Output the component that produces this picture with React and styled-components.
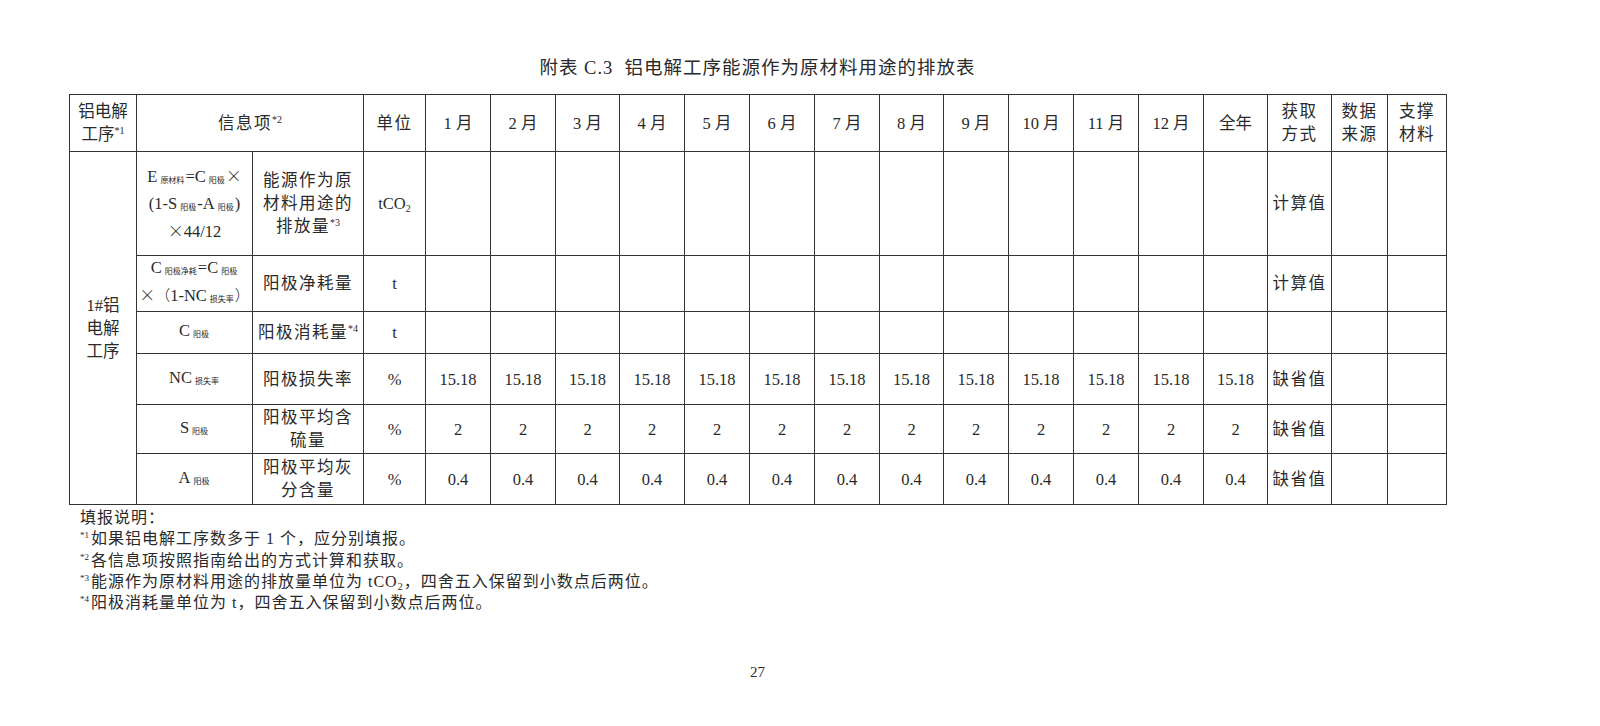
import React from "react";
import styled, { createGlobalStyle } from "styled-components";

const Global = createGlobalStyle`
  html, body { margin: 0; padding: 0; background: #fff; }
  body { font-family: "Liberation Serif", "Noto Sans CJK SC", serif; color: #2a2a2a; }
`;

const Page = styled.div`
  width: 1600px;
  height: 726px;
  box-sizing: border-box;
  padding: 56px 0 0 69px;
  display: flex;
  flex-direction: column;
`;

const Title = styled.h1`
  width: 1377px;
  margin: 0 0 14px;
  text-align: center;
  font-weight: normal;
  font-size: 18.5px;
  line-height: 24px;
  letter-spacing: 1px;
`;

const Table = styled.table`
  width: 1378px;
  table-layout: fixed;
  border-collapse: collapse;
  font-size: 16.5px;
  line-height: 23px;
`;

const Cell = styled.td`
  border: 1px solid #333;
  padding: 0 ${(p) => (p.$tight ? "0" : "2px")};
  text-align: center;
  vertical-align: middle;
  font-weight: normal;
  white-space: ${(p) => (p.$tight ? "nowrap" : "normal")};
  letter-spacing: ${(p) => (p.$cjk ? "1.5px" : "0")};
`;

const Row = styled.tr`
  height: ${(p) => p.$h}px;
`;

const Sub = styled.span`
  font-size: 8px;
  vertical-align: -1px;
  margin: 0 1px 0 3px;
  letter-spacing: 0;
`;

const Times = styled.span`
  font-family: "Noto Sans CJK SC", sans-serif;
  font-weight: 300;
  font-size: 16px;
`;

const Paren = styled.span`
  font-family: "Noto Sans CJK SC", sans-serif;
  font-weight: 300;
  font-size: 15px;
`;

const Sup = styled.sup`
  font-size: 10px;
  vertical-align: 6px;
  line-height: 0;
  letter-spacing: 0;
`;

const Small = styled.sub`
  font-size: 10px;
  vertical-align: -3px;
  line-height: 0;
`;

const Notes = styled.div`
  margin: 2px 0 0 11px;
  font-size: 16px;
  line-height: 21.3px;
  letter-spacing: 1px;
`;

const NoteLine = styled.div`
  white-space: nowrap;
`;

const NoteSup = styled.sup`
  font-size: 9px;
  vertical-align: 6px;
  line-height: 0;
  margin-right: 2px;
  letter-spacing: 0;
`;

const PageNo = styled.div`
  width: 1377px;
  margin-top: 51px;
  text-align: center;
  font-size: 15px;
`;

const widths = [67, 116, 111, 62, 65, 65, 64, 65, 65, 65, 65, 64, 65, 65, 65, 65, 64, 64, 56, 59];
const months = ["1 月", "2 月", "3 月", "4 月", "5 月", "6 月", "7 月", "8 月", "9 月", "10 月", "11 月", "12 月", "全年"];

const Values = ({ v, method }) => (
  <>
    {Array.from({ length: 13 }).map((_, i) => (
      <Cell key={i}>{v}</Cell>
    ))}
    <Cell $cjk>{method}</Cell>
    <Cell />
    <Cell />
  </>
);

export default function App() {
  return (
    <Page>
      <Global />
      <Title>附表 C.3&nbsp; 铝电解工序能源作为原材料用途的排放表</Title>
      <Table>
        <colgroup>
          {widths.map((w, i) => (
            <col key={i} style={{ width: w }} />
          ))}
        </colgroup>
        <tbody>
          <Row $h={57}>
            <Cell as="th">
              铝电解
              <br />
              工序<Sup>*1</Sup>
            </Cell>
            <Cell as="th" colSpan={2} $cjk>
              信息项<Sup>*2</Sup>
            </Cell>
            <Cell as="th" $cjk>单位</Cell>
            {months.map((m) => (
              <Cell as="th" key={m}>{m}</Cell>
            ))}
            <Cell as="th" $cjk>获取<br />方式</Cell>
            <Cell as="th" $cjk>数据<br />来源</Cell>
            <Cell as="th" $cjk>支撑<br />材料</Cell>
          </Row>
          <Row $h={104}>
            <Cell rowSpan={6}>
              1#铝
              <br />
              电解
              <br />
              工序
            </Cell>
            <Cell $tight>
              E<Sub>原材料</Sub>=C<Sub>阳极</Sub><Times>×</Times>
              <br />
              (1-S<Sub>阳极</Sub>-A<Sub>阳极</Sub>)
              <br />
              <Times>×</Times>44/12
            </Cell>
            <Cell $cjk>
              能源作为原
              <br />
              材料用途的
              <br />
              排放量<Sup>*3</Sup>
            </Cell>
            <Cell>
              tCO<Small>2</Small>
            </Cell>
            <Values v="" method="计算值" />
          </Row>
          <Row $h={54}>
            <Cell $tight>
              C<Sub>阳极净耗</Sub>=C<Sub>阳极</Sub>
              <br />
              <Times>×</Times><Paren>（</Paren>1-NC<Sub>损失率</Sub><Paren>）</Paren>
            </Cell>
            <Cell $cjk>阳极净耗量</Cell>
            <Cell>t</Cell>
            <Values v="" method="计算值" />
          </Row>
          <Row $h={42}>
            <Cell>
              C<Sub>阳极</Sub>
            </Cell>
            <Cell $cjk>
              阳极消耗量<Sup>*4</Sup>
            </Cell>
            <Cell>t</Cell>
            <Values v="" method="" />
          </Row>
          <Row $h={51}>
            <Cell>
              NC<Sub>损失率</Sub>
            </Cell>
            <Cell $cjk>阳极损失率</Cell>
            <Cell>%</Cell>
            <Values v="15.18" method="缺省值" />
          </Row>
          <Row $h={49}>
            <Cell>
              S<Sub>阳极</Sub>
            </Cell>
            <Cell $cjk>
              阳极平均含
              <br />
              硫量
            </Cell>
            <Cell>%</Cell>
            <Values v="2" method="缺省值" />
          </Row>
          <Row $h={51}>
            <Cell>
              A<Sub>阳极</Sub>
            </Cell>
            <Cell $cjk>
              阳极平均灰
              <br />
              分含量
            </Cell>
            <Cell>%</Cell>
            <Values v="0.4" method="缺省值" />
          </Row>
        </tbody>
      </Table>
      <Notes>
        <NoteLine>填报说明：</NoteLine>
        <NoteLine>
          <NoteSup>*1</NoteSup>如果铝电解工序数多于 1 个，应分别填报。
        </NoteLine>
        <NoteLine>
          <NoteSup>*2</NoteSup>各信息项按照指南给出的方式计算和获取。
        </NoteLine>
        <NoteLine>
          <NoteSup>*3</NoteSup>能源作为原材料用途的排放量单位为 tCO<Small>2</Small>，四舍五入保留到小数点后两位。
        </NoteLine>
        <NoteLine>
          <NoteSup>*4</NoteSup>阳极消耗量单位为 t，四舍五入保留到小数点后两位。
        </NoteLine>
      </Notes>
      <PageNo>27</PageNo>
    </Page>
  );
}
